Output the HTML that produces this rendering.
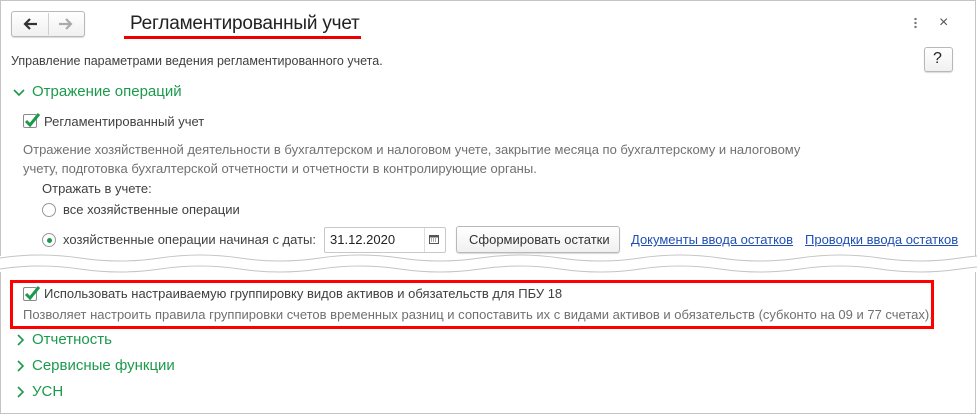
<!DOCTYPE html>
<html><head><meta charset="utf-8"><style>
*{margin:0;padding:0;box-sizing:border-box}
body{width:977px;height:414px;background:#fff;font-family:"Liberation Sans",Arial,sans-serif;font-size:13px;color:#404040;position:relative;overflow:hidden}
.a{position:absolute;white-space:nowrap}
.g{color:#1c9a4c;font-size:15px}
.d{color:#707070;font-size:13px}
.cb{position:absolute;width:14px;height:14px;border:1px solid #8a8a8a;background:#fff;border-radius:2px}
.cb svg{position:absolute;left:-1px;top:-4px}
.rb{position:absolute;width:14px;height:14px;border:1px solid #999;border-radius:50%;background:#fff}
.btn{position:absolute;border:1px solid #b8b8b8;border-radius:3px;background:linear-gradient(#fff,#f0f0f0);box-shadow:0 1px 1px rgba(0,0,0,.15)}
a{color:#1f4fb4;text-decoration:underline}
</style></head><body>
<div class="a" style="left:0;top:0;width:976px;height:414px;border:1px solid #c4c4c4;border-top:none"></div>
<div class="a" style="left:0;top:0;width:976px;height:1px;background:#c4c4c4"></div>
<div class="btn" style="left:11px;top:11px;width:74px;height:26px"></div>
<div class="a" style="left:48px;top:13px;width:1px;height:22px;background:#d0d0d0"></div>
<svg class="a" style="left:22px;top:17px" width="16" height="14"><path d="M15 7H3M8 2L3 7l5 5" stroke="#333" stroke-width="2.2" fill="none"/></svg>
<svg class="a" style="left:58px;top:17px" width="16" height="14"><path d="M1 7h12M8 2l5 5-5 5" stroke="#aaa" stroke-width="2.2" fill="none"/></svg>
<div class="a" style="left:130px;top:13px;font-size:19px;color:#222;letter-spacing:-0.2px">Регламентированный учет</div>
<div class="a" style="left:124px;top:36px;width:237px;height:3px;background:#e00"></div>
<div class="a" style="left:914px;top:17px;width:3px;height:12px;background:radial-gradient(circle,#777 1.2px,transparent 1.3px) 0 0/3px 4px"></div>
<div class="a" style="left:939px;top:14px;font-size:16px;color:#555">×</div>
<div class="btn" style="left:924px;top:47px;width:29px;height:25px"></div>
<div class="a" style="left:933px;top:50px;font-size:16px;color:#222">?</div>
<div class="a" style="left:11px;top:54px;font-size:12.5px">Управление параметрами ведения регламентированного учета.</div>
<svg class="a" style="left:13px;top:88px" width="12" height="10"><path d="M1 2l5 5 5-5" stroke="#1c9a4c" stroke-width="1.6" fill="none"/></svg>
<div class="a g" style="left:32px;top:83px">Отражение операций</div>
<div class="cb" style="left:23px;top:114px"><svg width="18" height="18"><path d="M3 10l4 4 9-11" stroke="#1c9a4c" stroke-width="3" fill="none"/></svg></div>
<div class="a" style="left:44px;top:114px">Регламентированный учет</div>
<div class="a d" style="left:23px;top:140px;line-height:19px">Отражение хозяйственной деятельности в бухгалтерском и налоговом учете, закрытие месяца по бухгалтерскому и налоговому<br>учету, подготовка бухгалтерской отчетности и отчетности в контролирующие органы.</div>
<div class="a" style="left:42px;top:181px">Отражать в учете:</div>
<div class="rb" style="left:42px;top:203px"></div>
<div class="a" style="left:63px;top:202px">все хозяйственные операции</div>
<div class="rb" style="left:42px;top:233px"></div>
<div class="a" style="left:47px;top:238px;width:5px;height:5px;border-radius:50%;background:#1c9a4c"></div>
<div class="a" style="left:63px;top:232px">хозяйственные операции начиная с даты:</div>
<div class="a" style="left:324px;top:227px;width:122px;height:26px;border:1px solid #c8c8c8;border-radius:2px"></div>
<div class="a" style="left:424px;top:228px;width:1px;height:24px;background:#ddd"></div>
<div class="a" style="left:330px;top:232px;font-size:13px;color:#222">31.12.2020</div>
<svg class="a" style="left:429px;top:234px" width="10" height="10"><rect x="0.5" y="1.5" width="9" height="8" fill="none" stroke="#555"/><rect x="0.5" y="1.5" width="9" height="2" fill="#555"/><path d="M2 5h6M2 7h6" stroke="#555" stroke-dasharray="1 1"/></svg>
<div class="btn" style="left:456px;top:226px;width:164px;height:27px"></div>
<div class="a" style="left:469px;top:232px;color:#333">Сформировать остатки</div>
<a class="a" style="left:631px;top:232px">Документы ввода остатков</a>
<a class="a" style="left:805px;top:232px">Проводки ввода остатков</a>
<div class="a" style="left:0;top:256px;width:977px;height:16px;background:#fff"></div>
<svg class="a" style="left:0;top:252px" width="977" height="24"><path d="M0 6 Q40 0 80 6 T160 6 T240 6 T320 6 T400 6 T480 6 T560 6 T640 6 T720 6 T800 6 T880 6 T960 6 T1040 6" stroke="#c4c4c4" fill="none"/><path d="M0 17 Q40 11 80 17 T160 17 T240 17 T320 17 T400 17 T480 17 T560 17 T640 17 T720 17 T800 17 T880 17 T960 17 T1040 17" stroke="#c4c4c4" fill="none"/></svg>
<div class="a" style="left:10px;top:280px;width:924px;height:49px;border:3px solid #f00"></div>
<div class="cb" style="left:23px;top:287px"><svg width="18" height="18"><path d="M3 10l4 4 9-11" stroke="#1c9a4c" stroke-width="3" fill="none"/></svg></div>
<div class="a" style="left:44px;top:286px">Использовать настраиваемую группировку видов активов и обязательств для ПБУ 18</div>
<div class="a d" style="left:23px;top:307px">Позволяет настроить правила группировки счетов временных разниц и сопоставить их с видами активов и обязательств (субконто на 09 и 77 счетах).</div>
<svg class="a" style="left:16px;top:334px" width="10" height="12"><path d="M2 1l5 5-5 5" stroke="#1c9a4c" stroke-width="1.6" fill="none"/></svg>
<div class="a g" style="left:32px;top:331px">Отчетность</div>
<svg class="a" style="left:16px;top:360px" width="10" height="12"><path d="M2 1l5 5-5 5" stroke="#1c9a4c" stroke-width="1.6" fill="none"/></svg>
<div class="a g" style="left:32px;top:357px">Сервисные функции</div>
<svg class="a" style="left:16px;top:386px" width="10" height="12"><path d="M2 1l5 5-5 5" stroke="#1c9a4c" stroke-width="1.6" fill="none"/></svg>
<div class="a g" style="left:32px;top:383px">УСН</div>
</body></html>
